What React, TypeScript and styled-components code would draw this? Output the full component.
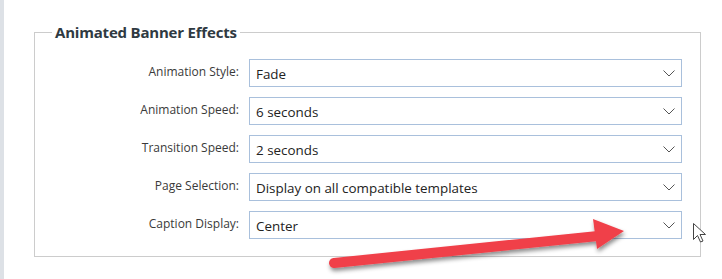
import React from "react";
import styled, { createGlobalStyle } from "styled-components";

const Global = createGlobalStyle`
  html, body { margin: 0; padding: 0; background: #ffffff; }
  body { font-family: "Open Sans", "Liberation Sans", sans-serif; }
`;

const Page = styled.div`
  position: relative;
  width: 722px;
  height: 279px;
  display: flex;
  overflow: hidden;
  background: #ffffff;
`;

const SideStrip = styled.div`
  width: 4px;
  flex: none;
  background: #dde1e6;
`;

const Content = styled.div`
  flex: 1;
  padding: 22px 0 0 30px;
`;

const Fieldset = styled.fieldset`
  margin: 0;
  width: 667px;
  box-sizing: border-box;
  border: 1px solid #cccccc;
  padding: 17px 18px 17px 0;
  min-width: 0;
`;

const Legend = styled.legend`
  margin-left: 17px;
  padding: 0 3px;
  font-family: "Open Sans", "Liberation Sans", sans-serif;
  font-weight: 700;
  font-size: 15px;
  letter-spacing: -0.2px;
  line-height: 20px;
  color: #2f3a42;
`;

const Form = styled.div`
  display: grid;
  grid-template-columns: 204px 1fr;
  column-gap: 10px;
  row-gap: 10px;
  align-items: center;
`;

const Label = styled.label`
  text-align: right;
  font-size: 12px;
  line-height: 16px;
  color: #3a3a3a;
  margin-top: -2px;
`;

const SelectBox = styled.div`
  height: 28px;
  box-sizing: border-box;
  border: 1px solid #a9c0dc;
  background: #ffffff;
  display: flex;
  align-items: center;
  justify-content: space-between;
  padding: 0 6px 0 6px;
`;

const Value = styled.span`
  font-size: 13.4px;
  line-height: 18px;
  color: #222222;
  margin-top: 2px;
`;

const Chevron = styled.svg`
  width: 12px;
  height: 7px;
  flex: none;
`;

const Overlay = styled.svg`
  position: absolute;
  left: 0;
  top: 0;
  pointer-events: none;
`;

const rows: [string, string][] = [
  ["Animation Style:", "Fade"],
  ["Animation Speed:", "6 seconds"],
  ["Transition Speed:", "2 seconds"],
  ["Page Selection:", "Display on all compatible templates"],
  ["Caption Display:", "Center"],
];

export default function App() {
  return (
    <>
      <Global />
      <Page>
        <SideStrip />
        <Content>
          <Fieldset>
            <Legend>Animated Banner Effects</Legend>
            <Form>
              {rows.map(([label, value]) => (
                <React.Fragment key={label}>
                  <Label>{label}</Label>
                  <SelectBox>
                    <Value>{value}</Value>
                    <Chevron viewBox="0 0 12 7">
                      <polyline points="0.5,0.5 6,6 11.5,0.5" fill="none" stroke="#555" strokeWidth="1" />
                    </Chevron>
                  </SelectBox>
                </React.Fragment>
              ))}
            </Form>
          </Fieldset>
        </Content>
        <Overlay width="722" height="279" viewBox="0 0 722 279">
          <defs>
            <filter id="sh" x="-10%" y="-50%" width="120%" height="200%">
              <feDropShadow dx="1" dy="3" stdDeviation="2" floodColor="#000" floodOpacity="0.45" />
            </filter>
          </defs>
          <g filter="url(#sh)" fill="#f0404a">
            <line x1="334" y1="263" x2="598" y2="236" stroke="#f0404a" strokeWidth="10" strokeLinecap="round" />
            <polygon points="593,219 624,231 597,249" />
          </g>
          <path
            d="M693.5 223.5 L693.5 239.5 L697.5 235.5 L700.5 242 L703 241 L700 234.5 L705.5 234.5 Z"
            fill="#ffffff"
            stroke="#444"
            strokeWidth="1"
            strokeLinejoin="round"
          />
        </Overlay>
      </Page>
    </>
  );
}
